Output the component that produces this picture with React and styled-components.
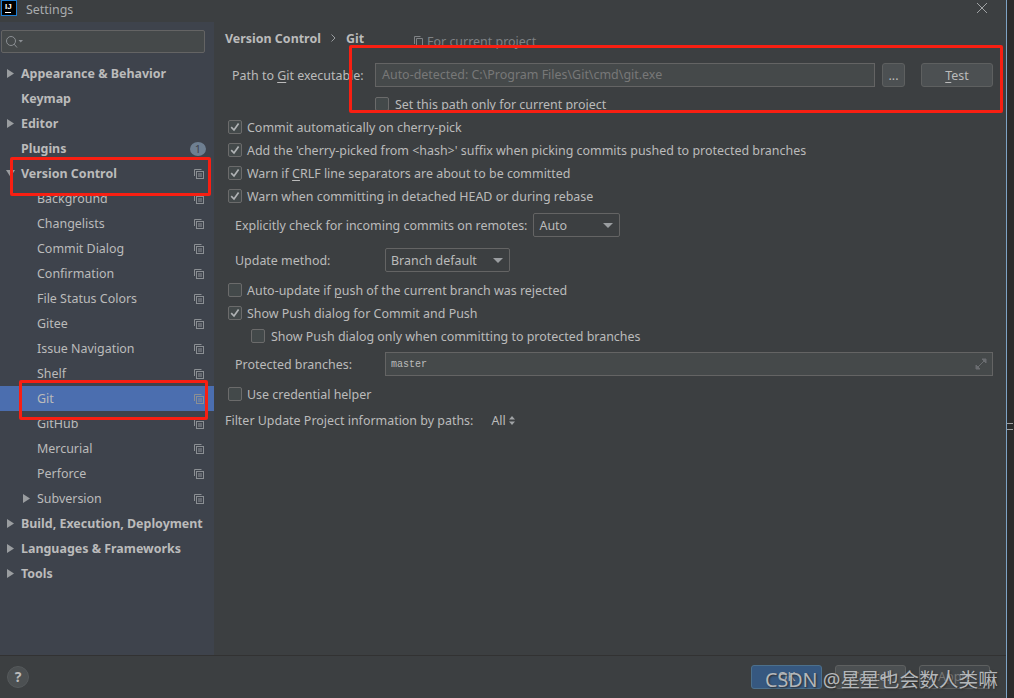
import styled, { createGlobalStyle } from 'styled-components';

const GlobalStyle = createGlobalStyle`
  html, body {
    margin: 0;
    padding: 0;
    background: #2b2b2b;
  }
  * {
    box-sizing: border-box;
  }
`;

const sidebarItems = [
  { name: 'Appearance & Behavior', bold: true, arrow: 'right' },
  { name: 'Keymap', bold: true },
  { name: 'Editor', bold: true, arrow: 'right' },
  { name: 'Plugins', bold: true, badge: '1' },
  { name: 'Version Control', bold: true, arrow: 'down', copy: true },
  { name: 'Background', copy: true },
  { name: 'Changelists', copy: true },
  { name: 'Commit Dialog', copy: true },
  { name: 'Confirmation', copy: true },
  { name: 'File Status Colors', copy: true },
  { name: 'Gitee', copy: true },
  { name: 'Issue Navigation', copy: true },
  { name: 'Shelf', copy: true },
  { name: 'Git', copy: true, selected: true },
  { name: 'GitHub', copy: true },
  { name: 'Mercurial', copy: true },
  { name: 'Perforce', copy: true },
  { name: 'Subversion', arrow: 'right', nested: true, copy: true },
  { name: 'Build, Execution, Deployment', bold: true, arrow: 'right' },
  { name: 'Languages & Frameworks', bold: true, arrow: 'right' },
  { name: 'Tools', bold: true, arrow: 'right' },
];

const CopyIcon = () => (
  <CopyGlyph viewBox="0 0 10 10" width="10" height="10">
    <path d="M0.5 7V0.5H7.5" fill="none" stroke="#8b8f93" />
    <rect x="2.5" y="2.5" width="7" height="7" fill="none" stroke="#8b8f93" />
    <path d="M4 5H8M4 7H8" stroke="#8b8f93" />
  </CopyGlyph>
);

const Arrow = ({ dir }) => (
  <svg viewBox="0 0 9 9" width="9" height="9">
    {dir === 'down' ? <path d="M0 1H9L4.5 8Z" fill="#9a9da0" /> : <path d="M1 0L8 4.5L1 9Z" fill="#9a9da0" />}
  </svg>
);

const Check = ({ checked }) => (
  <CheckBox>
    {checked && (
      <svg viewBox="0 0 14 14" width="14" height="14">
        <path d="M3.2 7.2L6 10L10.6 3.6" fill="none" stroke="#b0b3b5" strokeWidth="1.7" />
      </svg>
    )}
  </CheckBox>
);

const Mnemonic = styled.span`
  text-decoration: underline;
  text-underline-offset: 2px;
`;

export default function App() {
  return (
    <>
      <GlobalStyle />
      <Page>
        <Window>
          <TitleBar>
            <Logo>
              <LogoText>IJ</LogoText>
              <LogoBar />
            </Logo>
            <TitleText>Settings</TitleText>
            <CloseIcon viewBox="0 0 10 10" width="10" height="10">
              <path d="M0 0L10 10M10 0L0 10" stroke="#a0a3a5" />
            </CloseIcon>
          </TitleBar>

          <Body>
            <Sidebar>
              <SearchBox>
                <svg viewBox="0 0 17 12" width="17" height="12">
                  <circle cx="5" cy="5" r="4.5" fill="none" stroke="#8b8f93" />
                  <path d="M8.2 8.2L11 11.5" stroke="#8b8f93" />
                  <path d="M12.5 4H17L14.75 6.5Z" fill="#8b8f93" />
                </svg>
              </SearchBox>
              <TreeList>
                {sidebarItems.map((item) => (
                  <TreeRow key={item.name} $selected={item.selected}>
                    <ArrowSlot $nested={item.nested} $sub={!item.bold}>{item.arrow && <Arrow dir={item.arrow} />}</ArrowSlot>
                    <TreeLabel $bold={item.bold}>{item.name}</TreeLabel>
                    {item.copy && <CopyIcon />}
                    {item.badge && <Badge>{item.badge}</Badge>}
                  </TreeRow>
                ))}
              </TreeList>
            </Sidebar>

            <Content>
              <Breadcrumb>
                <Crumb>Version Control</Crumb>
                <svg viewBox="0 0 5 8" width="5" height="8">
                  <path d="M0.5 0.5L4 4L0.5 7.5" fill="none" stroke="#9a9da0" />
                </svg>
                <Crumb>Git</Crumb>
                <ProjectNote>
                  <svg viewBox="0 0 9 10" width="9" height="10">
                    <path d="M0.5 8V0.5H6.5M2.5 2.5H8.5V9.5H2.5Z" fill="none" stroke="#7f8285" />
                  </svg>
                  For current project
                </ProjectNote>
              </Breadcrumb>

              <PathRow>
                <PathLabel>Path to <Mnemonic>G</Mnemonic>it executable:</PathLabel>
                <PathInput>Auto-detected: C:\Program Files\Git\cmd\git.exe</PathInput>
                <BrowseButton>...</BrowseButton>
                <TestButton><Mnemonic>T</Mnemonic>est</TestButton>
              </PathRow>
              <OnlyProjectRow>
                <Check />
                <span>Set this path only for current project</span>
              </OnlyProjectRow>

              <ChecksFirst>
                <CheckRow><Check checked /><span>Commit automatically on cherry-pick</span></CheckRow>
                <CheckRow><Check checked /><span>Add the 'cherry-picked from &lt;hash&gt;' suffix when picking commits pushed to protected branches</span></CheckRow>
                <CheckRow><Check checked /><span>Warn if <Mnemonic>C</Mnemonic>RLF line separators are about to be committed</span></CheckRow>
                <CheckRow><Check checked /><span>Warn when committing in detached HEAD or during rebase</span></CheckRow>
              </ChecksFirst>

              <FieldRow $top={6}>
                <FieldLabel>Explicitly check for incoming commits on remotes:</FieldLabel>
                <Dropdown $width={87}>Auto<Caret /></Dropdown>
              </FieldRow>
              <FieldRow $top={11}>
                <FieldLabel $width={150}>Update method:</FieldLabel>
                <Dropdown $width={125}>Branch default<Caret /></Dropdown>
              </FieldRow>

              <ChecksSecond>
                <CheckRow><Check /><span>Auto-update if <Mnemonic>p</Mnemonic>ush of the current branch was rejected</span></CheckRow>
                <CheckRow><Check checked /><span>Show Push dialog for Commit and Push</span></CheckRow>
                <CheckRow $indent><Check /><span>Show Push dialog only when committing to protected branches</span></CheckRow>
              </ChecksSecond>

              <FieldRow $top={5}>
                <FieldLabel $width={150}>Protected branches:</FieldLabel>
                <BranchInput>
                  master
                  <svg viewBox="0 0 12 12" width="12" height="12">
                    <path d="M7 1H11V5ZM1 7V11H5Z M9 3L3 9" fill="#6a6d70" stroke="#6a6d70" />
                  </svg>
                </BranchInput>
              </FieldRow>

              <CredentialRow><Check /><span>Use credential helper</span></CredentialRow>

              <FilterRow>
                <span>Filter Update Project information by paths:</span>
                <FilterValue>
                  All
                  <svg viewBox="0 0 6 9" width="6" height="9">
                    <path d="M3 0L6 3.5H0ZM3 9L0 5.5H6Z" fill="#a0a3a5" />
                  </svg>
                </FilterValue>
              </FilterRow>
            </Content>
          </Body>

          <Footer>
            <HelpButton>?</HelpButton>
            <FooterButtons>
              <DialogButton $primary>OK</DialogButton>
              <DialogButton>Cancel</DialogButton>
              <DialogButton $dim>Apply</DialogButton>
            </FooterButtons>
          </Footer>

          <RedBox $x={349} $y={45} $w={654} $h={68} />
          <RedBox $x={10} $y={157} $w={201} $h={39} />
          <RedBox $x={19} $y={380} $w={189} $h={40} />
          <Watermark>CSDN @星星也会数人类嘛</Watermark>
        </Window>
        <Edge />
        <Gutter>
          <GutterDash />
          <GutterDash />
        </Gutter>
      </Page>
    </>
  );
}

const Page = styled.div`
  width: 1014px;
  height: 698px;
  display: flex;
  overflow: hidden;
  background: #2b2b2b;
  font-family: "Noto Sans", "Open Sans", sans-serif;
  font-size: 12.45px;
  color: #bbbbbb;
`;

const Window = styled.div`
  position: relative;
  width: 1006px;
  height: 698px;
  flex: none;
  display: flex;
  flex-direction: column;
  background: #3c3f41;
`;

const Edge = styled.div`
  width: 1px;
  height: 698px;
  flex: none;
  background: #7ea3c4;
`;

const Gutter = styled.div`
  flex: 1;
  padding-top: 423px;
  display: flex;
  flex-direction: column;
  gap: 5px;
`;

const GutterDash = styled.div`
  width: 6px;
  height: 1px;
  background: #a0a0a0;
`;

const TitleBar = styled.div`
  height: 22px;
  flex: none;
  display: flex;
  align-items: center;
  padding: 0 19px 3px 1px;
  background: #3c3f41;
`;

const Logo = styled.div`
  width: 16px;
  height: 16px;
  flex: none;
  margin-top: -3px;
  padding: 2px 0 0 3px;
  background: #000000;
  border: 1px solid #1d7fd6;
`;

const LogoText = styled.span`
  display: block;
  font: bold 8px/8px "Liberation Sans", sans-serif;
  color: #ffffff;
`;

const LogoBar = styled.div`
  width: 6px;
  height: 1px;
  margin-top: 1px;
  background: #ffffff;
`;

const TitleText = styled.span`
  margin-left: 9px;
  color: #a9acae;
`;

const CloseIcon = styled.svg`
  margin-left: auto;
  margin-bottom: 3px;
`;

const Body = styled.div`
  flex: 1;
  display: flex;
  min-height: 0;
`;

const Sidebar = styled.div`
  width: 214px;
  flex: none;
  padding-top: 8px;
  background: #3e434c;
`;

const SearchBox = styled.div`
  width: 204px;
  height: 23px;
  margin-left: 1px;
  padding-left: 4px;
  display: flex;
  align-items: center;
  background: #45494a;
  border: 1px solid #646464;
  border-radius: 2px;
`;

const TreeList = styled.div`
  margin-top: 8px;
`;

const TreeRow = styled.div`
  height: 25px;
  display: flex;
  align-items: center;
  padding-right: 10px;
  background: ${(props) => (props.$selected ? '#4b6eaf' : 'transparent')};
`;

const ArrowSlot = styled.span`
  width: ${(props) => (props.$sub ? '37px' : '21px')};
  flex: none;
  display: flex;
  align-items: center;
  padding-left: ${(props) => (props.$nested ? '22px' : '6px')};
`;

const TreeLabel = styled.span`
  font-weight: ${(props) => (props.$bold ? 700 : 400)};
  white-space: nowrap;
`;

const CopyGlyph = styled.svg`
  margin-left: auto;
`;

const Badge = styled.span`
  margin-left: auto;
  margin-right: -2px;
  width: 16px;
  height: 14px;
  border-radius: 50%;
  background: #6e7f91;
  color: #3e434c;
  font-size: 11px;
  line-height: 14px;
  text-align: center;
`;

const Content = styled.div`
  flex: 1;
  min-width: 0;
  padding-left: 11px;
  display: flex;
  flex-direction: column;
`;

const Breadcrumb = styled.div`
  height: 32px;
  flex: none;
  display: flex;
  align-items: center;
  gap: 10px;
`;

const Crumb = styled.span`
  font-weight: 700;
`;

const ProjectNote = styled.span`
  margin-left: 40px;
  margin-top: 6px;
  display: flex;
  align-items: center;
  gap: 4px;
  color: #7f8285;
`;

const PathRow = styled.div`
  height: 24px;
  flex: none;
  margin-top: 9px;
  padding-left: 7px;
  display: flex;
  align-items: center;
`;

const PathLabel = styled.span`
  width: 143px;
  flex: none;
  white-space: nowrap;
`;

const PathInput = styled.div`
  width: 500px;
  height: 24px;
  flex: none;
  padding-left: 6px;
  line-height: 22px;
  background: #45494a;
  border: 1px solid #646464;
  color: #787878;
`;

const BrowseButton = styled.div`
  width: 23px;
  height: 24px;
  flex: none;
  margin-left: 7px;
  text-align: center;
  line-height: 24px;
  background: #4c5052;
  border: 1px solid #5e6060;
  border-radius: 3px;
`;

const TestButton = styled.div`
  width: 72px;
  height: 24px;
  flex: none;
  margin-left: 16px;
  text-align: center;
  line-height: 24px;
  background: #4c5052;
  border: 1px solid #5e6060;
  border-radius: 3px;
`;

const OnlyProjectRow = styled.div`
  height: 20px;
  flex: none;
  margin-top: 7px;
  padding-left: 150px;
  display: flex;
  align-items: center;
  gap: 6px;
`;

const CheckBox = styled.span`
  width: 14px;
  height: 14px;
  flex: none;
  display: block;
  background: #43494a;
  border: 1px solid #6b6b6b;
  border-radius: 2px;

  svg {
    display: block;
    margin: -1px;
  }
`;

const ChecksFirst = styled.div`
  margin-top: 1px;
`;

const ChecksSecond = styled.div`
  margin-top: 6px;
`;

const CheckRow = styled.div`
  height: 23px;
  display: flex;
  align-items: center;
  gap: ${(props) => (props.$indent ? '6px' : '5px')};
  padding-left: ${(props) => (props.$indent ? '26px' : '3px')};
  white-space: nowrap;

  > span:last-child {
    padding-top: 2px;
  }
`;

const CredentialRow = styled(CheckRow)`
  margin-top: 6px;
`;

const FieldRow = styled.div`
  height: 24px;
  flex: none;
  margin-top: ${(props) => props.$top}px;
  padding-left: 10px;
  display: flex;
  align-items: center;
`;

const FieldLabel = styled.span`
  white-space: nowrap;
  flex: none;
  width: ${(props) => (props.$width ? `${props.$width}px` : 'auto')};
  margin-right: ${(props) => (props.$width ? '0' : '6px')};
`;

const Dropdown = styled.div`
  width: ${(props) => props.$width}px;
  height: 24px;
  flex: none;
  padding: 0 5px;
  display: flex;
  align-items: center;
  justify-content: space-between;
  background: #3c3f41;
  border: 1px solid #646464;
  border-radius: 2px;
`;

const Caret = styled.span`
  width: 0;
  height: 0;
  margin-right: 1px;
  border-left: 5px solid transparent;
  border-right: 5px solid transparent;
  border-top: 5px solid #9a9da0;
`;

const BranchInput = styled.div`
  width: 608px;
  height: 24px;
  flex: none;
  padding: 0 5px;
  display: flex;
  align-items: center;
  justify-content: space-between;
  background: #45494a;
  border: 1px solid #646464;
  font-family: "Liberation Mono", monospace;
  font-size: 10px;
`;

const FilterRow = styled.div`
  height: 20px;
  flex: none;
  margin-top: 5px;
  display: flex;
  align-items: center;
  white-space: nowrap;
`;

const FilterValue = styled.span`
  margin-left: 18px;
  display: flex;
  align-items: center;
  gap: 3px;
`;

const Footer = styled.div`
  height: 43px;
  flex: none;
  padding: 0 16px 0 7px;
  display: flex;
  align-items: center;
  justify-content: space-between;
  border-top: 1px solid #323232;
`;

const HelpButton = styled.div`
  width: 22px;
  height: 22px;
  border-radius: 50%;
  text-align: center;
  line-height: 20px;
  font-weight: 700;
  font-size: 14px;
  background: #4c5052;
  border: 1px solid #55595b;
`;

const FooterButtons = styled.div`
  display: flex;
  gap: 13px;
`;

const DialogButton = styled.div`
  width: 71px;
  height: 24px;
  text-align: center;
  line-height: 22px;
  border-radius: 3px;
  background: ${(props) => (props.$primary ? '#365880' : props.$dim ? '#43474a' : '#4c5052')};
  border: 1px solid ${(props) => (props.$primary ? '#4c708c' : '#5e6060')};
  color: ${(props) => (props.$dim ? '#777777' : '#bbbbbb')};
`;

const RedBox = styled.div`
  position: absolute;
  left: ${(props) => props.$x}px;
  top: ${(props) => props.$y}px;
  width: ${(props) => props.$w}px;
  height: ${(props) => props.$h}px;
  border: 3px solid #f81f12;
  border-radius: 2px;
`;

const Watermark = styled.div`
  position: absolute;
  left: 765px;
  top: 666px;
  font-family: "Noto Sans", "Noto Sans CJK SC", sans-serif;
  font-size: 19.7px;
  line-height: 28px;
  white-space: nowrap;
  color: #b4b7ba;
  text-shadow: 1px 1px 2px #2b2b2b;
`;
